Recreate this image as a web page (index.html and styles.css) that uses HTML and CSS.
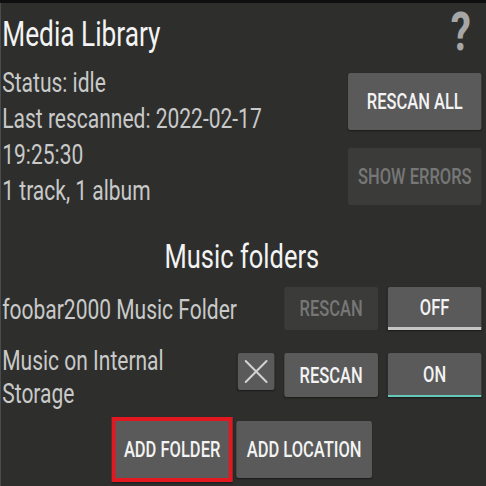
FILE: index.html
```html
<!DOCTYPE html>
<html lang="en">
<head>
<meta charset="utf-8">
<title>Media Library</title>
<link rel="stylesheet" href="styles.css">
</head>
<body>
<div class="screen">
  <header class="top">
    <h1 class="title">Media Library</h1>
    <span class="help">?</span>
  </header>

  <section class="status">
    <div class="status-text">
      <p>Status: idle</p>
      <p>Last rescanned: 2022-02-17</p>
      <p>19:25:30</p>
      <p>1 track, 1 album</p>
    </div>
    <div class="status-actions">
      <button class="btn btn-wide btn-tall">RESCAN ALL</button>
      <button class="btn btn-wide btn-tall btn-disabled">SHOW ERRORS</button>
    </div>
  </section>

  <h2 class="section-title">Music folders</h2>

  <div class="folder-row row-first">
    <div class="folder-name single">foobar2000 Music Folder</div>
    <button class="btn btn-small btn-disabled">RESCAN</button>
    <button class="btn btn-small toggle toggle-off">OFF</button>
  </div>

  <div class="folder-row row-second">
    <div class="folder-name double">Music on Internal<br>Storage</div>
    <button class="btn btn-remove" aria-label="Remove">
      <svg viewBox="0 0 37 37" preserveAspectRatio="none" class="x-icon">
        <line x1="8" y1="8" x2="29" y2="29"/>
        <line x1="29" y1="8" x2="8" y2="29"/>
      </svg>
    </button>
    <button class="btn btn-small btn-row2">RESCAN</button>
    <button class="btn btn-small btn-row2 toggle toggle-on">ON</button>
  </div>

  <div class="add-row">
    <button class="btn btn-add btn-focus">ADD FOLDER</button>
    <button class="btn btn-add btn-location">ADD LOCATION</button>
  </div>
</div>
</body>
</html>
```

FILE: styles.css
```css
html, body {
  margin: 0;
  padding: 0;
}
body {
  width: 486px;
  height: 486px;
  overflow: hidden;
  background: #2e2f2d;
  box-shadow: inset 1px 0 0 #4c4d4b;
  font-family: Roboto, "Noto Sans", sans-serif;
}
.screen {
  width: 648px;
  height: 486px;
  box-sizing: border-box;
  border-top: 3px solid #0f0f0f;
  padding: 0 6px 0 3px;
  transform: scaleX(0.75);
  transform-origin: 0 0;
}
.top {
  display: flex;
  justify-content: space-between;
  align-items: flex-start;
  height: 52px;
  padding-right: 14px;
}
.title {
  margin: 12px 0 0;
  font-size: 35px;
  line-height: 40px;
  font-weight: 400;
  color: #f3f3f3;
}
.help {
  margin-top: 5px;
  font-size: 54px;
  line-height: 47px;
  font-weight: 700;
  color: #a6a6a6;
}
.status {
  display: flex;
  justify-content: space-between;
  align-items: flex-start;
  margin-top: 10px;
}
.status-text p {
  margin: 0;
  font-size: 28px;
  line-height: 36px;
  color: #c9c9c9;
}
.status-actions {
  display: flex;
  flex-direction: column;
  gap: 18px;
  padding-top: 8px;
}
.btn {
  border: none;
  border-radius: 3px;
  background: #5a5a5a;
  color: #f3f3f3;
  font-family: Roboto, "Noto Sans", sans-serif;
  font-size: 22px;
  font-weight: 500;
  padding: 0;
  box-sizing: border-box;
  box-shadow: 0 1px 2px rgba(0, 0, 0, 0.45);
  display: flex;
  align-items: center;
  justify-content: center;
}
.btn-wide {
  width: 178px;
}
.btn-tall {
  height: 57px;
}
.btn-disabled {
  background: #3b3c3a;
  color: #777777;
  box-shadow: none;
}
.section-title {
  margin: 27px 0 0;
  text-align: center;
  font-size: 34px;
  line-height: 40px;
  font-weight: 400;
  color: #f3f3f3;
}
.folder-row {
  display: flex;
  align-items: flex-start;
  gap: 13px;
}
.row-first {
  margin-top: 11px;
}
.row-second {
  margin-top: 14px;
}
.folder-name {
  flex: 1;
  font-size: 28px;
  color: #c9c9c9;
}
.folder-name.single {
  line-height: 36px;
  margin-top: 5px;
}
.folder-name.double {
  line-height: 33px;
}
.btn-small {
  width: 125px;
  height: 43px;
}
.btn-row2 {
  height: 44px;
  margin-top: 9px;
}
.btn-remove {
  width: 49px;
  height: 37px;
  margin-top: 9px;
}
.x-icon {
  width: 100%;
  height: 100%;
  display: block;
}
.x-icon line {
  stroke: #d2d2d2;
  stroke-width: 2;
  stroke-linecap: round;
}
.toggle-off {
  border-bottom: 3px solid #c6c6c6;
  border-radius: 3px 3px 0 0;
}
.toggle-on {
  border-bottom: 2px solid #66c8b9;
  border-radius: 3px 3px 0 0;
}
.add-row {
  display: flex;
  justify-content: center;
  align-items: center;
  gap: 5px;
  margin-top: 7px;
}
.btn-add {
  height: 57px;
}
.btn-focus {
  width: 161px;
  height: 65px;
  border: 4px solid #e3171f;
  border-left-width: 5px;
  border-right-width: 5px;
  border-radius: 0;
}
.btn-location {
  width: 181px;
}
```
